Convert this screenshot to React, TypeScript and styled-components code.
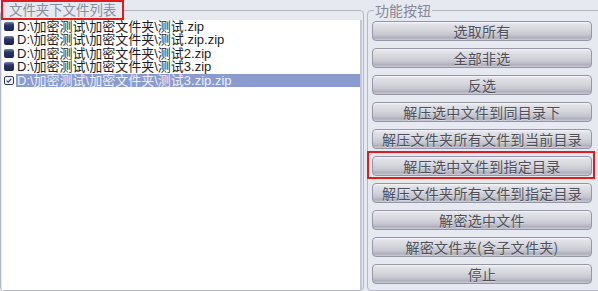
import styled, { createGlobalStyle } from 'styled-components';

const GlobalStyle = createGlobalStyle`
  html, body {
    margin: 0;
    padding: 0;
    background: #e7e9f1;
    overflow: hidden;
  }
`;

const Window = styled.div`
  display: flex;
  width: 598px;
  height: 291px;
  overflow: hidden;
  background: #e7e9f1;
  font-family: 'Liberation Sans', 'Noto Sans CJK SC', sans-serif;
`;

const FileGroup = styled.fieldset`
  flex: 0 0 364px;
  box-sizing: border-box;
  margin: 0;
  padding: 0;
  border: 1px solid #b3b7c9;
  border-radius: 4px;
  display: flex;
  flex-direction: column;
  min-width: 0;
`;

const FileLegend = styled.legend`
  margin-left: 0;
  padding: 0 6px;
  height: 20px;
  box-sizing: border-box;
  border: 2px solid #e21c1c;
  font-family: 'Noto Sans CJK SC', serif;
  font-size: 13.5px;
  line-height: 15px;
  color: #8b8d9c;
  letter-spacing: -0.1px;
`;

const FileList = styled.ul`
  list-style: none;
  margin: 0 1px 0 1px;
  padding: 0;
  flex: 1;
  background: #ffffff;
  border-right: 2px solid #c3c6d6;
`;

const FileRow = styled.li`
  display: flex;
  align-items: center;
  height: 13.4px;
  padding-left: 2px;
`;

const FileName = styled.span<{ $selected?: boolean }>`
  flex: 1;
  align-self: stretch;
  margin-left: 2px;
  padding-left: 1px;
  font-size: 13px;
  line-height: 13.4px;
  white-space: nowrap;
  color: ${({ $selected }) => ($selected ? '#eef0f8' : '#1c1c24')};
  background: ${({ $selected }) => ($selected ? '#8a9ccf' : 'transparent')};
`;

const ActionGroup = styled.fieldset`
  flex: 1;
  box-sizing: border-box;
  margin: 0 -20px 0 3px;
  padding: 1px 25px 0 4px;
  border: 1px solid #b3b7c9;
  border-radius: 4px;
  display: flex;
  flex-direction: column;
  gap: 7px;
  min-width: 0;
`;

const ActionLegend = styled.legend`
  margin-left: 2px;
  padding: 0 1px;
  height: 20px;
  font-family: 'Noto Sans CJK SC', serif;
  font-size: 14px;
  line-height: 20px;
  color: #858797;
`;

const ActionButton = styled.button<{ $marked?: boolean }>`
  position: relative;
  width: 220px;
  height: 20px;
  box-sizing: border-box;
  margin: 0;
  padding: 0;
  border: 1px solid #9597a8;
  border-radius: 4px;
  background: linear-gradient(
    to bottom,
    #f6f6f8 0%,
    #e2e3e8 12%,
    #d5d6dc 45%,
    #c6c7cf 70%,
    #aeafbb 88%,
    #c9cad2 100%
  );
  font-family: 'Noto Sans CJK SC', serif;
  font-size: 14px;
  line-height: 18px;
  letter-spacing: 0.3px;
  color: #4e4f5a;
  text-shadow: 0 1px 0 rgba(255, 255, 255, 0.4);

  &::after {
    content: '';
    display: ${({ $marked }) => ($marked ? 'block' : 'none')};
    position: absolute;
    left: -6px;
    right: -4px;
    top: -6px;
    bottom: -4px;
    border: 2px solid #e21c1c;
  }
`;

const BoxIcon = ({ checked }: { checked?: boolean }) => (
  <svg width="10" height="9" viewBox="0 0 10 9">
    <defs>
      <linearGradient id="boxFill" x1="0" y1="0" x2="0" y2="1">
        <stop offset="0" stopColor="#7482b4" />
        <stop offset="0.35" stopColor="#2c3768" />
        <stop offset="1" stopColor="#1b2350" />
      </linearGradient>
    </defs>
    {checked ? (
      <>
        <rect x="0.5" y="0.5" width="9" height="8" rx="1.5" fill="#f2f4fa" stroke="#2c3768" />
        <path d="M2.6 4.6 L4.2 6.1 L7.2 2.8" fill="none" stroke="#2c3768" strokeWidth="1.1" />
      </>
    ) : (
      <rect x="0" y="0" width="10" height="9" rx="2" fill="url(#boxFill)" />
    )}
  </svg>
);

const files = [
  'D:\\加密测试\\加密文件夹\\测试.zip',
  'D:\\加密测试\\加密文件夹\\测试.zip.zip',
  'D:\\加密测试\\加密文件夹\\测试2.zip',
  'D:\\加密测试\\加密文件夹\\测试3.zip',
  'D:\\加密测试\\加密文件夹\\测试3.zip.zip',
];

const actions = [
  '选取所有',
  '全部非选',
  '反选',
  '解压选中文件到同目录下',
  '解压文件夹所有文件到当前目录',
  '解压选中文件到指定目录',
  '解压文件夹所有文件到指定目录',
  '解密选中文件',
  '解密文件夹(含子文件夹)',
  '停止',
];

export default function App() {
  return (
    <>
      <GlobalStyle />
      <Window>
        <FileGroup>
          <FileLegend>文件夹下文件列表</FileLegend>
          <FileList>
            {files.map((f, i) => {
              const selected = i === files.length - 1;
              return (
                <FileRow key={f}>
                  <BoxIcon checked={selected} />
                  <FileName $selected={selected}>{f}</FileName>
                </FileRow>
              );
            })}
          </FileList>
        </FileGroup>
        <ActionGroup>
          <ActionLegend>功能按钮</ActionLegend>
          {actions.map((a, i) => (
            <ActionButton key={a} $marked={i === 5}>
              {a}
            </ActionButton>
          ))}
        </ActionGroup>
      </Window>
    </>
  );
}
